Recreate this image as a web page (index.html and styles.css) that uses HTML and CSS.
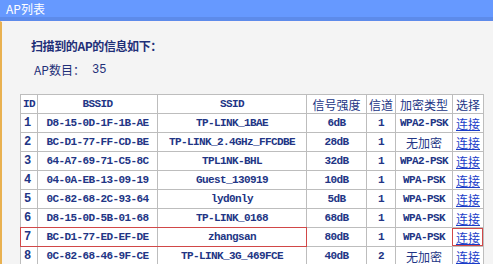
FILE: index.html
```html
<!DOCTYPE html>
<html lang="zh-CN">
<head>
<meta charset="utf-8">
<title>AP列表</title>
<link rel="stylesheet" href="styles.css">
</head>
<body>
<div class="titlebar">AP列表</div>
<div class="content">
  <p class="intro">扫描到的AP的信息如下：</p>
  <p class="count"><span class="label">AP数目：</span><span class="num">35</span></p>
  <div class="tablewrap">
    <table class="aplist">
      <colgroup>
        <col class="c-id"><col class="c-bssid"><col class="c-ssid"><col class="c-sig"><col class="c-ch"><col class="c-enc"><col class="c-sel">
      </colgroup>
      <thead>
        <tr><th>ID</th><th>BSSID</th><th>SSID</th><th class="cjk">信号强度</th><th class="cjk">信道</th><th class="cjk">加密类型</th><th class="cjk">选择</th></tr>
      </thead>
      <tbody>
        <tr><td class="id">1</td><td>D8-15-0D-1F-1B-AE</td><td>TP-LINK_1BAE</td><td>6dB</td><td>1</td><td>WPA2-PSK</td><td><a href="#">连接</a></td></tr>
        <tr><td class="id">2</td><td>BC-D1-77-FF-CD-BE</td><td>TP-LINK_2.4GHz_FFCDBE</td><td>28dB</td><td>1</td><td class="cjk">无加密</td><td><a href="#">连接</a></td></tr>
        <tr><td class="id">3</td><td>64-A7-69-71-C5-8C</td><td>TPL1NK-BHL</td><td>32dB</td><td>1</td><td>WPA2-PSK</td><td><a href="#">连接</a></td></tr>
        <tr><td class="id">4</td><td>04-0A-EB-13-09-19</td><td>Guest_130919</td><td>10dB</td><td>1</td><td>WPA-PSK</td><td><a href="#">连接</a></td></tr>
        <tr><td class="id">5</td><td>0C-82-68-2C-93-64</td><td>lyd0nly</td><td>5dB</td><td>1</td><td>WPA-PSK</td><td><a href="#">连接</a></td></tr>
        <tr><td class="id">6</td><td>D8-15-0D-5B-01-68</td><td>TP-LINK_0168</td><td>68dB</td><td>1</td><td>WPA-PSK</td><td><a href="#">连接</a></td></tr>
        <tr><td class="id">7</td><td>BC-D1-77-ED-EF-DE</td><td>zhangsan</td><td>80dB</td><td>1</td><td>WPA-PSK</td><td><a href="#">连接</a></td></tr>
        <tr><td class="id">8</td><td>0C-82-68-46-9F-CE</td><td>TP-LINK_3G_469FCE</td><td>40dB</td><td>2</td><td class="cjk">无加密</td><td><a href="#">连接</a></td></tr>
      </tbody>
    </table>
    <div class="mark mark-row"></div>
    <div class="mark mark-link"></div>
  </div>
</div>
</body>
</html>
```
FILE: styles.css
```css
html, body {
  margin: 0;
  padding: 0;
  background: #f4f4f4;
  overflow: hidden;
}
body {
  font-family: "Noto Sans CJK SC", "Liberation Sans", sans-serif;
  font-size: 12px;
  color: #1f2f78;
}
.titlebar {
  height: 17px;
  background: #6699ff;
  border-bottom: 4px solid #5d8bea;
  color: #ffffff;
  font-size: 12px;
  line-height: 17px;
  padding-left: 6px;
}
.content {
  border-left: 2px solid #e9b150;
  border-top: 1px solid #faf2f2;
  height: 300px;
  padding-left: 18px;
}
.intro {
  margin: 0;
  padding-top: 15px;
  padding-left: 11px;
  height: 18px;
  line-height: 18px;
  font-weight: bold;
  font-size: 12px;
  letter-spacing: -0.4px;
  color: #1f2f78;
}
.count {
  margin: 0;
  padding-top: 6px;
  padding-left: 14px;
  height: 18px;
  line-height: 18px;
  display: flex;
  font-size: 12px;
  color: #1f2f78;
}
.count .label {
  width: 58px;
}
.count .num {
  font-family: "Liberation Mono", monospace;
  font-size: 12px;
}
.tablewrap {
  position: relative;
  margin-top: 15px;
  width: 463px;
}
.aplist {
  border-collapse: collapse;
  table-layout: fixed;
  width: 463px;
  background: #ffffff;
}
.c-id { width: 17px; }
.c-bssid { width: 120px; }
.c-ssid { width: 149px; }
.c-sig { width: 60px; }
.c-ch { width: 29px; }
.c-enc { width: 57px; }
.c-sel { width: 31px; }
.aplist th, .aplist td {
  border: 1px solid #bdbdbd;
  height: 18px;
  padding: 0;
  text-align: center;
  vertical-align: middle;
  font-family: "Liberation Mono", monospace;
  font-size: 11px;
  letter-spacing: -0.6px;
  font-weight: bold;
  color: #223585;
  white-space: nowrap;
  overflow: hidden;
}
.aplist .cjk {
  font-family: "Noto Sans CJK SC", sans-serif;
  font-size: 12px;
  letter-spacing: 0;
  font-weight: normal;
}
.aplist td.id {
  text-align: left;
  padding-left: 3px;
  font-size: 12px;
}
.aplist a {
  font-family: "Noto Sans CJK SC", sans-serif;
  font-size: 12px;
  letter-spacing: 0;
  font-weight: normal;
  color: #1a3cc8;
  text-decoration: underline;
}
.mark {
  position: absolute;
  border: 1px solid #d14848;
  box-sizing: border-box;
}
.mark-row {
  left: 0;
  top: 133px;
  width: 287px;
  height: 20px;
}
.mark-link {
  left: 432px;
  top: 134px;
  width: 31px;
  height: 18px;
}
```
